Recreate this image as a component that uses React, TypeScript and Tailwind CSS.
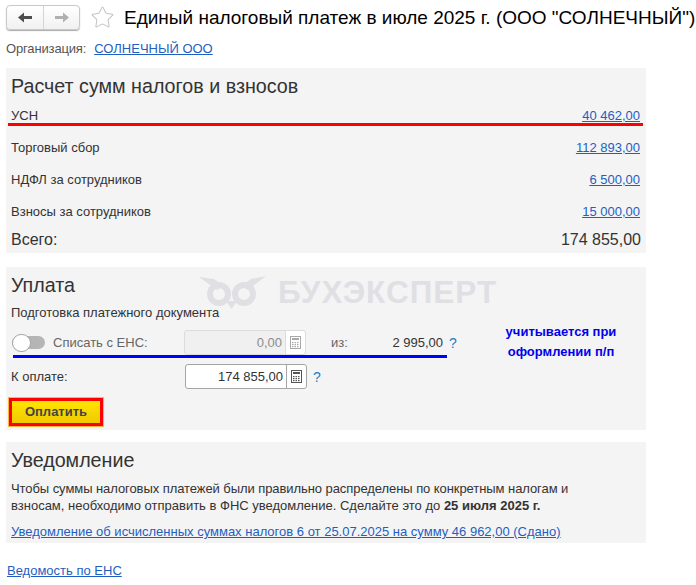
import { Star } from 'lucide-react';

const rows = [
  { label: 'УСН', value: '40 462,00' },
  { label: 'Торговый сбор', value: '112 893,00' },
  { label: 'НДФЛ за сотрудников', value: '6 500,00' },
  { label: 'Взносы за сотрудников', value: '15 000,00' },
];

function NavArrow({ color, flip }: { color: string; flip?: boolean }) {
  return (
    <svg width="14" height="11" viewBox="0 0 14 11" className={flip ? 'rotate-180' : ''}>
      <path d="M0 5.5 L6 0.5 V4 H14 V7 H6 V10.5 Z" fill={color} />
    </svg>
  );
}

function CalcIcon({ muted }: { muted?: boolean }) {
  const color = muted ? '#a8a8a8' : '#555555';
  return (
    <svg width="13" height="13" viewBox="0 0 13 13" fill="none">
      <rect x="1.5" y="0.5" width="10" height="12" stroke={color} />
      <rect x="3" y="2" width="7" height="2" fill={color} />
      {[3, 5.5, 8].map((x) =>
        [6, 8, 10].map((y) => <rect key={`${x}-${y}`} x={x} y={y} width="1.5" height="1.2" fill={color} />),
      )}
    </svg>
  );
}

function AmountField({ value, muted }: { value: string; muted?: boolean }) {
  return (
    <div
      className={`flex h-[25px] w-[122px] shrink-0 rounded-[3px] border ${
        muted ? 'border-[#dcdcdc] bg-[#f0f0f0] text-[#8c8c8c]' : 'border-[#a5a5a5] bg-white text-[#333]'
      }`}
    >
      <span className="flex-1 pr-[3px] text-right leading-[23px]">{value}</span>
      <span className={`flex w-[20px] items-center justify-center rounded-r-[3px] border-l bg-white ${muted ? 'border-[#dcdcdc]' : 'border-[#a5a5a5]'}`}>
        <CalcIcon muted={muted} />
      </span>
    </div>
  );
}

export default function App() {
  return (
    <div className="relative h-[585px] w-[696px] overflow-hidden bg-white font-['Liberation_Sans',sans-serif] text-[13px] leading-[16px] text-[#333]">
      <header className="flex h-[34px] items-center pl-[6px] pt-[1px]">
        <div className="flex h-[25px] w-[74px] shrink-0 rounded-[4px] border border-[#c8c8c8] bg-gradient-to-b from-white to-[#f1f1f1] shadow-[0_1px_1px_#aaa]">
          <span className="flex w-[37px] items-center justify-center border-r border-[#d4d4d4]">
            <NavArrow color="#4d4d4d" />
          </span>
          <span className="flex flex-1 items-center justify-center">
            <NavArrow color="#b0b0b0" flip />
          </span>
        </div>
        <Star size={25} strokeWidth={1} className="ml-[10px] shrink-0 text-[#c4c4c4]" />
        <h1 className="ml-[9px] whitespace-nowrap text-[19px] leading-[24px] text-black">
          Единый налоговый платеж в июле 2025 г. (ООО "СОЛНЕЧНЫЙ")
        </h1>
      </header>

      <div className="flex h-[34px] items-center pb-[4px] pl-[6px]">
        <span className="tracking-[-0.15px] text-[#555]">Организация:</span>
        <a className="ml-[8px] text-[#1f5fbf] underline">СОЛНЕЧНЫЙ ООО</a>
      </div>

      <main className="ml-[6px] w-[640px]">
        <section className="h-[185px] bg-[#f4f4f4] px-[5px] pt-[6px]">
          <h2 className="text-[19.7px] leading-[24px] text-[#333]">Расчет сумм налогов и взносов</h2>
          <div className="mt-[7px]">
            {rows.map((row) => (
              <div key={row.label} className="flex h-[32px] items-start justify-between pr-[1px] pt-[3px]">
                <span>{row.label}</span>
                <a className="text-[#1f5fbf] underline">{row.value}</a>
              </div>
            ))}
          </div>
          <div className="-mt-[3px] flex items-center justify-between text-[16px] leading-[20px]">
            <span>Всего:</span>
            <span>174 855,00</span>
          </div>
        </section>

        <section className="mt-[14px] h-[163px] bg-[#f4f4f4] px-[5px] pt-[6px]">
          <h2 className="text-[19.7px] leading-[24px]">Уплата</h2>
          <p className="mt-[8px]">Подготовка платежного документа</p>
          <div className="mt-[9px] flex h-[25px] items-center">
            <span className="relative ml-[1px] h-[13px] w-[33px] shrink-0 rounded-full bg-[#b5b5b5]">
              <span className="absolute -top-[2px] left-0 h-[18px] w-[19px] rounded-full border border-[#a5a5a5] bg-white" />
            </span>
            <span className="ml-[8px] w-[131px] shrink-0 text-[#666]">Списать с ЕНС:</span>
            <AmountField value="0,00" muted />
            <span className="ml-[25px] w-[50px] text-[#666]">из:</span>
            <span className="w-[62px] text-right">2 995,00</span>
            <span className="ml-[6px] text-[14px] text-[#1b7fc4]">?</span>
          </div>
          <div className="mt-[9px] flex h-[25px] items-center">
            <span className="w-[174px] shrink-0">К оплате:</span>
            <AmountField value="174 855,00" />
            <span className="ml-[6px] text-[14px] text-[#1b7fc4]">?</span>
          </div>
          <button className="ml-[-2px] mt-[9px] flex h-[28px] w-[94px] items-center justify-center border-[3px] border-[#ff0000] bg-gradient-to-b from-[#ffe600] to-[#f0c800] font-bold text-[#444] outline outline-1 outline-[#f5b942]">
            Оплатить
          </button>
        </section>

        <section className="mt-[12px] h-[101px] bg-[#f4f4f4] px-[5px] pt-[6px]">
          <h2 className="text-[19.7px] leading-[24px]">Уведомление</h2>
          <p className="mt-[8px] leading-[17px]">
            <span className="tracking-[-0.07px]">
              Чтобы суммы налоговых платежей были правильно распределены по конкретным налогам и
            </span>
            <br />
            взносам, необходимо отправить в ФНС уведомление. Сделайте это до <b>25 июля 2025 г.</b>
          </p>
          <a className="mt-[10px] block text-[#1f5fbf] underline">
            Уведомление об исчисленных суммах налогов 6 от 25.07.2025 на сумму 46 962,00 (Сдано)
          </a>
        </section>
      </main>

      <a className="ml-[7px] mt-[20px] block text-[#1f5fbf] underline">Ведомость по ЕНС</a>

      {/* annotations drawn over the form */}
      <div className="absolute left-[8px] top-[123px] h-[3px] w-[635px] bg-[#ff0000]" />
      <div className="absolute left-[13px] top-[355px] h-[3px] w-[434px] bg-[#0000ff]" />
      <div className="absolute left-[490px] top-[322px] w-[142px] text-center text-[13px] font-bold leading-[20px] text-[#0000ee]">
        учитывается при
        <br />
        оформлении п/п
      </div>

      {/* watermark */}
      <div className="pointer-events-none absolute left-[198px] top-[274px] flex items-center">
        <svg width="70" height="36" viewBox="0 0 70 36" fill="none">
          <path d="M1 3 L16 5 L26 12 L19 16 Z M68 2 L53 5 L43 12 L50 16 Z" fill="#e0e0e4" />
          <circle cx="21" cy="20" r="9" stroke="#e0e0e4" strokeWidth="6" />
          <circle cx="46" cy="20" r="9" stroke="#e0e0e4" strokeWidth="6" />
          <path d="M28 27 H39 L33.5 35 Z" fill="#e0e0e4" />
        </svg>
        <span className="ml-[10px] text-[31.5px] font-bold leading-[36px] tracking-[1px] text-[#e0e0e4]">БУХЭКСПЕРТ</span>
      </div>
    </div>
  );
}
